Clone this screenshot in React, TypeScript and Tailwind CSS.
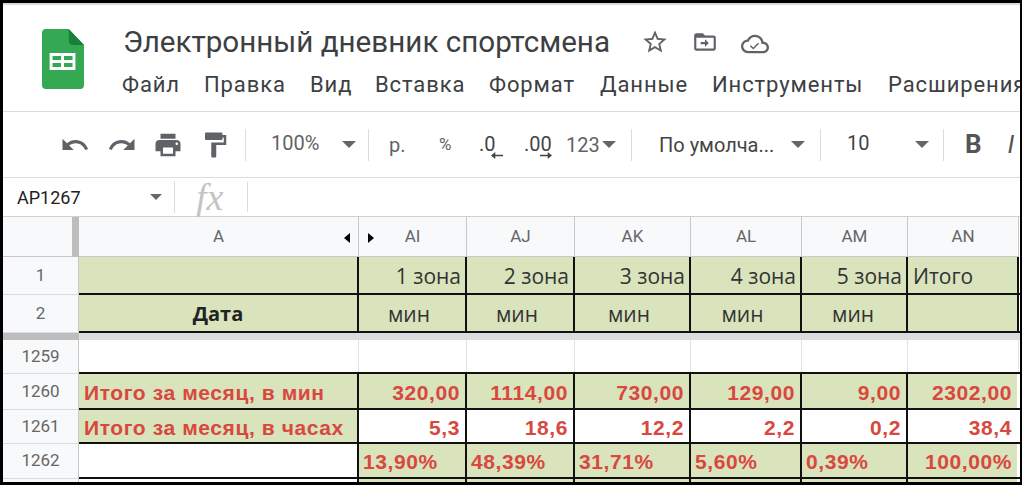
import React from "react";

const P = ({ d, className }: { d: string; className: string }) => (
  <svg viewBox="0 0 24 24" className={className} fill="currentColor"><path d={d} /></svg>
);
const Caret = ({ className = "" }: { className?: string }) => (
  <svg viewBox="0 0 14 7" className={"w-[14px] h-[7px] shrink-0 text-[#666] " + className} fill="currentColor"><path d="M0 0h14L7 7z" /></svg>
);
const Sep = () => <div className="w-px h-[32px] shrink-0 bg-[#dadce0]" />;

const menus = [
  ["Файл", "w-[82px]"],
  ["Правка", "w-[106px]"],
  ["Вид", "w-[65px]"],
  ["Вставка", "w-[114px]"],
  ["Формат", "w-[111px]"],
  ["Данные", "w-[112px]"],
  ["Инструменты", "w-[176px]"],
  ["Расширения", "w-[140px]"],
];

const Logo = () => (
  <svg viewBox="0 0 44 60" className="w-[42px] h-[60px] shrink-0" preserveAspectRatio="none">
    <path d="M4 0h24l16 16v40a4 4 0 0 1-4 4H4a4 4 0 0 1-4-4V4a4 4 0 0 1 4-4z" fill="#34a853" />
    <path d="M28 0l16 16H32a4 4 0 0 1-4-4z" fill="#188038" />
    <path d="M8 24h27v17H8zm3 3v4h9v-4zm12 0v4h9v-4zM11 34v4h9v-4zm12 0v4h9v-4z" fill="#fff" fillRule="evenodd" />
  </svg>
);

const cols = ["w-[280px]", "w-[108px]", "w-[108px]", "w-[116px]", "w-[111px]", "w-[106px]", "w-[111px]"];
const heads = ["A", "AI", "AJ", "AK", "AL", "AM", "AN"];

const RowHead = ({ n }: { n: string }) => (
  <div className="w-[76px] h-full shrink-0 bg-[#f8f9fa] border-r border-b border-r-[#c8c8c8] border-b-[#dadce0] flex items-center justify-center font-['Roboto',sans-serif] text-[#666] text-[17px]">{n}</div>
);

const zoneFont = "font-['Open_Sans',sans-serif] text-[21px] pt-[3px] text-[#333]";
const redFont = "font-['Liberation_Sans',sans-serif] font-bold text-[21px] pt-[3px] tracking-[0.6px] text-[#d8483f]";

const Cell = ({ w, t, cls }: { w: string; t?: string; cls: string }) => (
  <div className={`${w} shrink-0 h-full flex items-center border-r-2 border-[#111] whitespace-nowrap overflow-hidden ${cls}`}>{t}</div>
);

const green = "bg-[#d9e3bc]";

const DataRow = ({ n, h, first, vals, bgs }: { n: string; h: string; first: string; vals: string[]; bgs: string }) => (
  <div className={`flex shrink-0 ${h}`}>
    <RowHead n={n} />
    <div className="flex flex-1 border-b-2 border-[#111]">
      <Cell w={cols[0]} t={first} cls={`${green} pl-[5px] ${redFont}`} />
      {vals.map((v, i) => (
        <Cell key={i} w={cols[i + 1]} t={v} cls={`${bgs} justify-end pr-[5px] ${redFont} ${i === 5 ? "!border-white" : ""}`} />
      ))}
    </div>
  </div>
);

export default function App() {
  return (
    <div className="w-[1022px] h-[485px] overflow-hidden bg-white border-t-[3px] border-l-[3px] border-r-[2px] border-b-[3px] border-black flex flex-col">
      <div className="h-[109px] shrink-0 border-t-[2px] border-b border-[#dadce0] flex pl-[39px] pt-[24px]">
        <Logo />
        <div className="ml-[39px] flex flex-col -mt-[5px]">
          <div className="flex items-center h-[36px]">
            <span className="font-['Roboto',sans-serif] text-[29.6px] leading-[36px] text-[#3c4043] whitespace-nowrap w-[518px]">Электронный дневник спортсмена</span>
            <P d="M22 9.24l-7.19-.62L12 2 9.19 8.63 2 9.24l5.46 4.73L5.82 21 12 17.27 18.18 21l-1.63-7.03L22 9.24zM12 15.4l-3.76 2.27 1-4.28-3.32-2.88 4.38-.38L12 6.1l1.71 4.04 4.38.38-3.32 2.88 1 4.28L12 15.4z" className="w-[28px] h-[28px] text-[#5f6368]" />
            <svg viewBox="0 0 24 24" className="w-[26px] h-[26px] ml-[23px] text-[#5f6368]" fill="currentColor"><path d="M20 6h-8l-2-2H4c-1.1 0-2 .9-2 2v12c0 1.1.9 2 2 2h16c1.1 0 2-.9 2-2V8c0-1.1-.9-2-2-2zm0 12H4V8h16v10zm-8-1.5V14H8v-2h4V9.5l3.5 3.5z" /></svg>
            <svg viewBox="0 0 24 24" className="w-[28px] h-[28px] ml-[23px] mt-[3px] text-[#5f6368]" fill="currentColor"><path d="M19.35 10.04C18.67 6.59 15.64 4 12 4 9.11 4 6.6 5.64 5.35 8.04 2.34 8.36 0 10.91 0 14c0 3.31 2.69 6 6 6h13c2.76 0 5-2.24 5-5 0-2.64-2.05-4.78-4.65-4.96zM19 18H6c-2.21 0-4-1.79-4-4s1.79-4 4-4h.71C7.37 7.69 9.48 6 12 6c3.04 0 5.5 2.46 5.5 5.5v.5H19c1.66 0 3 1.34 3 3s-1.34 3-3 3z" /><path d="M10.5 15l-2-2-.9.9 2.9 2.9 5-5-.9-.9z" /></svg>
          </div>
          <div className="flex mt-[11px] -ml-[1px] whitespace-nowrap font-['Roboto',sans-serif] text-[22px] tracking-[0.9px] leading-[28px] text-[#3c4043]">
            {menus.map(([m, w]) => <span key={m} className={w + " shrink-0"}>{m}</span>)}
          </div>
        </div>
      </div>

      <div className="h-[66px] shrink-0 border-b border-[#dadce0] flex items-center pl-[57px] font-['Roboto',sans-serif] text-[#5f6368] text-[20px] whitespace-nowrap">
        <P d="M12.5 8c-2.65 0-5.05.99-6.9 2.6L2 7v9h9l-3.62-3.62c1.39-1.16 3.16-1.88 5.12-1.88 3.54 0 6.55 2.31 7.6 5.5l2.37-.78C21.08 11.03 17.15 8 12.5 8z" className="w-[30px] h-[30px]" />
        <P d="M18.4 10.6C16.55 8.99 14.15 8 11.5 8c-4.65 0-8.58 3.03-9.96 7.22L3.9 16c1.05-3.19 4.05-5.5 7.6-5.5 1.95 0 3.73.72 5.12 1.88L13 16h9V7l-3.6 3.6z" className="w-[30px] h-[30px] ml-[17px]" />
        <P d="M19 8H5c-1.66 0-3 1.34-3 3v6h4v4h12v-4h4v-6c0-1.66-1.34-3-3-3zm-3 11H8v-5h8v5zm3-7c-.55 0-1-.45-1-1s.45-1 1-1 1 .45 1 1-.45 1-1 1zm-1-9H6v4h12V3z" className="w-[30px] h-[30px] ml-[16px]" />
        <P d="M18 4V3c0-.55-.45-1-1-1H5c-.55 0-1 .45-1 1v4c0 .55.45 1 1 1h12c.55 0 1-.45 1-1V6h1v4H9v11c0 .55.45 1 1 1h2c.55 0 1-.45 1-1v-9h8V4h-3z" className="w-[30px] h-[30px] ml-[17px]" />
        <div className="ml-[15px]"><Sep /></div>
        <span className="ml-[25px] w-[71px] -mt-[3px]">100%</span>
        <Caret />
        <div className="ml-[12px]"><Sep /></div>
        <span className="ml-[20px] w-[50px]">р.</span>
        <span className="w-[40px] text-[17px]">%</span>
        <span className="relative w-[45px] -mt-[2px] text-[#444]">.0<svg viewBox="0 0 14 8" className="absolute left-[12px] top-[23px] w-[12px] h-[7px]" fill="currentColor"><path d="M0 4l5-4v3h9v2H5v3z" /></svg></span>
        <span className="relative w-[42px] -mt-[2px] text-[#444]">.00<svg viewBox="0 0 14 8" className="absolute left-[16px] top-[23px] w-[12px] h-[7px]" fill="currentColor"><path d="M14 4L9 0v3H0v2h9v3z" /></svg></span>
        <span className="w-[36px]">123</span>
        <Caret />
        <div className="ml-[15px]"><Sep /></div>
        <span className="ml-[27px] w-[132px] text-[#444]">По умолча...</span>
        <Caret />
        <div className="ml-[15px]"><Sep /></div>
        <span className="ml-[26px] w-[68px] text-[#444] -mt-[3px]">10</span>
        <Caret />
        <div className="ml-[14px]"><Sep /></div>
        <span className="ml-[21px] text-[26px] font-bold text-[#555]">B</span>
        <span className="ml-[26px] text-[26px] italic text-[#555]">I</span>
      </div>

      <div className="h-[39px] shrink-0 border-b border-[#d0d0d0] flex items-center font-['Roboto',sans-serif]">
        <span className="ml-[14px] w-[133px] text-[18px] text-[#222]">AP1267</span>
        <Caret className="!w-[12px] !h-[6px]" />
        <div className="ml-[12px] w-px h-[32px] bg-[#dadce0]" />
        <span className="ml-[21px] w-[51px] font-['Liberation_Serif',serif] italic text-[38px] leading-[32px] text-[#c4c4c4]">fx</span>
        <div className="w-px h-[30px] bg-[#dadce0]" />
      </div>

      <div className="h-[40px] shrink-0 flex font-['Roboto',sans-serif] text-[17px] text-[#666]">
        <div className="w-[69px] bg-[#f8f9fa] border-b border-[#c8c8c8]" />
        <div className="w-[7px] bg-[#bdbdbd]" />
        {heads.map((h, i) => (
          <div key={h} className={`${cols[i]} shrink-0 bg-[#f8f9fa] border-r border-b border-[#c8c8c8] relative flex items-center justify-center`}>
            {h}
            {i === 0 && <svg viewBox="0 0 6 10" className="absolute right-[8px] top-[16px] w-[6px] h-[10px] text-black" fill="currentColor"><path d="M6 0v10L0 5z" /></svg>}
            {i === 1 && <svg viewBox="0 0 6 10" className="absolute left-[9px] top-[16px] w-[6px] h-[10px] text-black" fill="currentColor"><path d="M0 0v10l6-5z" /></svg>}
          </div>
        ))}
      </div>

      <div className="flex h-[38px] shrink-0">
        <RowHead n="1" />
        <div className="flex flex-1 border-b-2 border-[#111]">
          <Cell w={cols[0]} cls={green} />
          {["1 зона", "2 зона", "3 зона", "4 зона", "5 зона"].map((t, i) => (
            <Cell key={t} w={cols[i + 1]} t={t} cls={`${green} justify-end pr-[4px] ${zoneFont}`} />
          ))}
          <Cell w={cols[6]} t="Итого" cls={`${green} pl-[5px] ${zoneFont}`} />
        </div>
      </div>
      <div className="flex h-[38px] shrink-0">
        <RowHead n="2" />
        <div className="flex flex-1 border-b-2 border-[#111]">
          <Cell w={cols[0]} t="Дата" cls={`${green} justify-center font-['Open_Sans',sans-serif] font-bold text-[20px] pt-[1px] text-[#222]`} />
          {["мин", "мин", "мин", "мин"].map((t, i) => (
            <Cell key={i} w={cols[i + 1]} t={t} cls={`${green} justify-center pr-[6px] ${zoneFont}`} />
          ))}
          <Cell w={cols[5]} t="мин" cls={`${green} justify-start pl-[30px] ${zoneFont}`} />
          <Cell w={cols[6]} cls={green} />
        </div>
      </div>

      <div className="flex h-[7px] shrink-0">
        <div className="w-[76px] bg-[#bdbdbd]" />
        <div className="flex-1 bg-[#dadce0]" />
      </div>

      <div className="flex h-[34px] shrink-0">
        <RowHead n="1259" />
        <div className="flex flex-1 border-b-2 border-[#111]">
          {cols.map((w, i) => <div key={i} className={`${w} shrink-0 border-r border-[#e2e3e5]`} />)}
        </div>
      </div>

      <DataRow n="1260" h="h-[36px]" first="Итого за месяц, в мин" vals={["320,00", "1114,00", "730,00", "129,00", "9,00", "2302,00"]} bgs={green} />
      <DataRow n="1261" h="h-[34px]" first="Итого за месяц, в часах" vals={["5,3", "18,6", "12,2", "2,2", "0,2", "38,4"]} bgs="bg-white" />
      <div className="flex h-[35px] shrink-0">
        <RowHead n="1262" />
        <div className="flex flex-1 border-b-2 border-[#111]">
          <Cell w={cols[0]} cls="bg-white" />
          {["13,90%", "48,39%", "31,71%", "5,60%", "0,39%"].map((t, i) => (
            <Cell key={t} w={cols[i + 1]} t={t} cls={`${green} pl-[4px] ${redFont}`} />
          ))}
          <Cell w={cols[6]} t="100,00%" cls={`${green} justify-end pr-[5px] !border-white ${redFont}`} />
        </div>
      </div>
      <div className="flex flex-1">
        <div className="w-[76px] bg-[#f8f9fa] border-r border-[#c8c8c8]" />
        <div className="flex flex-1">
          {cols.map((w, i) => <div key={i} className={`${w} shrink-0 border-r-2 ${i === 6 ? "border-white" : "border-[#111]"} ${i === 0 ? "bg-white" : green}`} />)}
        </div>
      </div>
    </div>
  );
}
